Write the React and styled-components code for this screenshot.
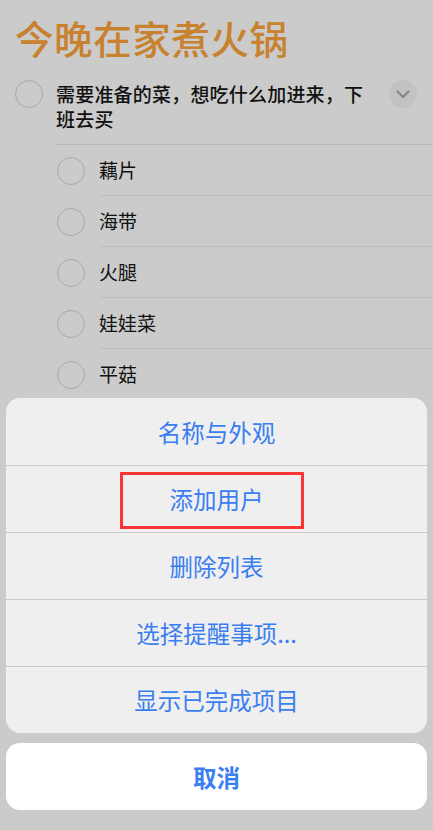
import React from "react";
import styled, { createGlobalStyle } from "styled-components";

const GlobalStyle = createGlobalStyle`
  html, body {
    margin: 0;
    padding: 0;
    background: #cbcbcb;
  }
  body {
    font-family: "Noto Sans CJK SC", "Noto Sans", sans-serif;
    -webkit-font-smoothing: antialiased;
  }
  * { box-sizing: border-box; }
`;

const Screen = styled.div`
  position: relative;
  width: 433px;
  height: 830px;
  overflow: hidden;
  background: #cbcbcb;
`;

const Title = styled.h1`
  margin: 0;
  padding: 14px 15px 0;
  font-size: 38.5px;
  line-height: 46px;
  font-weight: 500;
  color: #c7812f;
  letter-spacing: 0.6px;
`;

const TaskRow = styled.div`
  display: flex;
  align-items: flex-start;
  padding: 21px 16px 0 15px;
`;

const Circle = styled.span`
  flex: none;
  width: 28px;
  height: 28px;
  border-radius: 50%;
  border: 1.8px solid #a8a8a8;
  margin-top: ${(p) => p.$offset || 0}px;
`;

const TaskBody = styled.div`
  flex: 1;
  display: flex;
  align-items: flex-start;
  margin-left: 13px;
  padding-bottom: 13px;
  border-bottom: 1px solid #b9b9b9;
  margin-right: -16px;
  padding-right: 16px;
`;

const TaskText = styled.div`
  flex: 1;
  font-size: 19px;
  line-height: 25px;
  font-weight: 500;
  color: #111;
  letter-spacing: 0.2px;
  padding-right: 20px;
`;

const ChevronButton = styled.span`
  flex: none;
  width: 28px;
  height: 28px;
  margin-top: -1px;
  border-radius: 50%;
  background: #c2c2c2;
  display: flex;
  align-items: center;
  justify-content: center;
`;

const SubList = styled.div`
  padding-left: 57px;
`;

const SubRow = styled.div`
  display: flex;
  align-items: center;
  height: 51px;
`;

const SubText = styled.div`
  flex: 1;
  height: 51px;
  margin-left: 14px;
  padding-bottom: 2px;
  display: flex;
  align-items: center;
  font-size: 19px;
  color: #111;
  border-bottom: ${(p) => (p.$last ? "none" : "1px solid #bdbdbd")};
`;

const SheetArea = styled.div`
  position: absolute;
  left: 6px;
  right: 6px;
  bottom: 20px;
  display: flex;
  flex-direction: column;
  gap: 10px;
`;

const ActionGroup = styled.div`
  background: #efefef;
  border-radius: 14px;
  overflow: hidden;
`;

const ActionItem = styled.div`
  position: relative;
  height: 67px;
  display: flex;
  align-items: center;
  justify-content: center;
  font-size: 23.5px;
  font-weight: 400;
  color: #3a7ef1;
  border-top: ${(p) => (p.$first ? "none" : "1px solid #c9c9c9")};
`;

const CancelButton = styled.div`
  height: 67px;
  border-radius: 14px;
  background: #ffffff;
  display: flex;
  align-items: center;
  justify-content: center;
  font-size: 23.5px;
  font-weight: 700;
  color: #3a7ef1;
`;

const Highlight = styled.span`
  position: absolute;
  left: 114px;
  top: 6px;
  width: 184px;
  height: 57px;
  border: 3px solid #fb3535;
  pointer-events: none;
`;

const subtasks = ["藕片", "海带", "火腿", "娃娃菜", "平菇"];
const actions = ["名称与外观", "添加用户", "删除列表", "选择提醒事项...", "显示已完成项目"];

export default function App() {
  return (
    <>
      <GlobalStyle />
      <Screen>
        <Title>今晚在家煮火锅</Title>
        <TaskRow>
          <Circle $offset={-1} />
          <TaskBody>
            <TaskText>需要准备的菜，想吃什么加进来，下班去买</TaskText>
            <ChevronButton>
              <svg width="14" height="9" viewBox="0 0 14 9" fill="none">
                <path d="M1.5 1.5 L7 7 L12.5 1.5" stroke="#878787" strokeWidth="2.2" strokeLinecap="round" strokeLinejoin="round" />
              </svg>
            </ChevronButton>
          </TaskBody>
        </TaskRow>
        <SubList>
          {subtasks.map((s, i) => (
            <SubRow key={s}>
              <Circle />
              <SubText $last={i === subtasks.length - 1}>{s}</SubText>
            </SubRow>
          ))}
        </SubList>
        <SheetArea>
          <ActionGroup>
            {actions.map((a, i) => (
              <ActionItem key={a} $first={i === 0}>
                {a}
                {i === 1 && <Highlight />}
              </ActionItem>
            ))}
          </ActionGroup>
          <CancelButton>取消</CancelButton>
        </SheetArea>
      </Screen>
    </>
  );
}
